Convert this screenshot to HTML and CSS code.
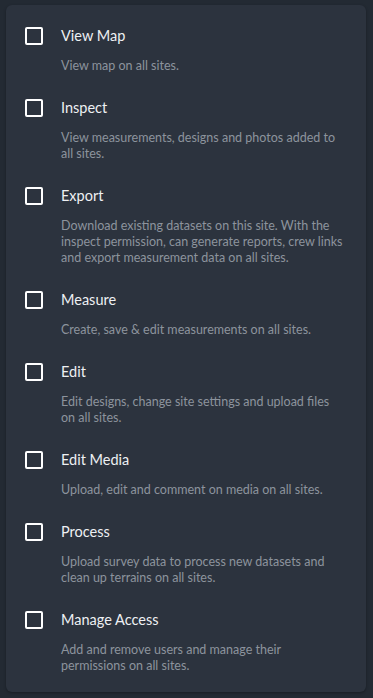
FILE: index.html
```html
<!DOCTYPE html>
<html lang="en">
<head>
  <meta charset="UTF-8">
  <title>Permissions</title>
  <link rel="stylesheet" href="styles.css">
</head>
<body>

  <div class="perm-card">
    <label class="perm">
      <span class="box"></span>
      <span class="perm-text">
        <span class="perm-title">View Map</span>
        <span class="perm-desc">View map on all sites.</span>
      </span>
    </label>
    <label class="perm">
      <span class="box"></span>
      <span class="perm-text">
        <span class="perm-title">Inspect</span>
        <span class="perm-desc">View measurements, designs and photos added to all sites.</span>
      </span>
    </label>
    <label class="perm">
      <span class="box"></span>
      <span class="perm-text">
        <span class="perm-title">Export</span>
        <span class="perm-desc">Download existing datasets on this site. With the inspect permission, can generate reports, crew links and export measurement data on all sites.</span>
      </span>
    </label>
    <label class="perm">
      <span class="box"></span>
      <span class="perm-text">
        <span class="perm-title">Measure</span>
        <span class="perm-desc">Create, save &amp; edit measurements on all sites.</span>
      </span>
    </label>
    <label class="perm">
      <span class="box"></span>
      <span class="perm-text">
        <span class="perm-title">Edit</span>
        <span class="perm-desc">Edit designs, change site settings and upload files on all sites.</span>
      </span>
    </label>
    <label class="perm">
      <span class="box"></span>
      <span class="perm-text">
        <span class="perm-title">Edit Media</span>
        <span class="perm-desc">Upload, edit and comment on media on all sites.</span>
      </span>
    </label>
    <label class="perm">
      <span class="box"></span>
      <span class="perm-text">
        <span class="perm-title">Process</span>
        <span class="perm-desc">Upload survey data to process new datasets and clean up terrains on all sites.</span>
      </span>
    </label>
    <label class="perm">
      <span class="box"></span>
      <span class="perm-text">
        <span class="perm-title">Manage Access</span>
        <span class="perm-desc">Add and remove users and manage their permissions on all sites.</span>
      </span>
    </label>
  </div>

</body>
</html>
```

FILE: styles.css
```css
body {
  margin: 0;
  padding: 5px 7px 6px 6px;
  background: #232a33;
  font-family: Lato, "Noto Sans", sans-serif;
}

.perm-card {
  background: #2c333e;
  border-radius: 6px;
  padding: 21px 20px 18px 19px;
  display: flex;
  flex-direction: column;
  gap: 24px;
  box-shadow: 0 1px 3px rgba(0,0,0,0.3);
}

.perm {
  display: flex;
  align-items: flex-start;
  gap: 18px;
  cursor: pointer;
}

.box {
  flex: none;
  width: 14px;
  height: 14px;
  margin-top: 1px;
  border: 2px solid #ffffff;
  border-radius: 2px;
}

.perm-text {
  display: flex;
  flex-direction: column;
  gap: 12px;
}

.perm-title {
  font-size: 14.5px;
  line-height: 20px;
  color: #eef0f3;
}

.perm-desc {
  font-size: 12.5px;
  line-height: 16px;
  color: #8c939d;
}
```
